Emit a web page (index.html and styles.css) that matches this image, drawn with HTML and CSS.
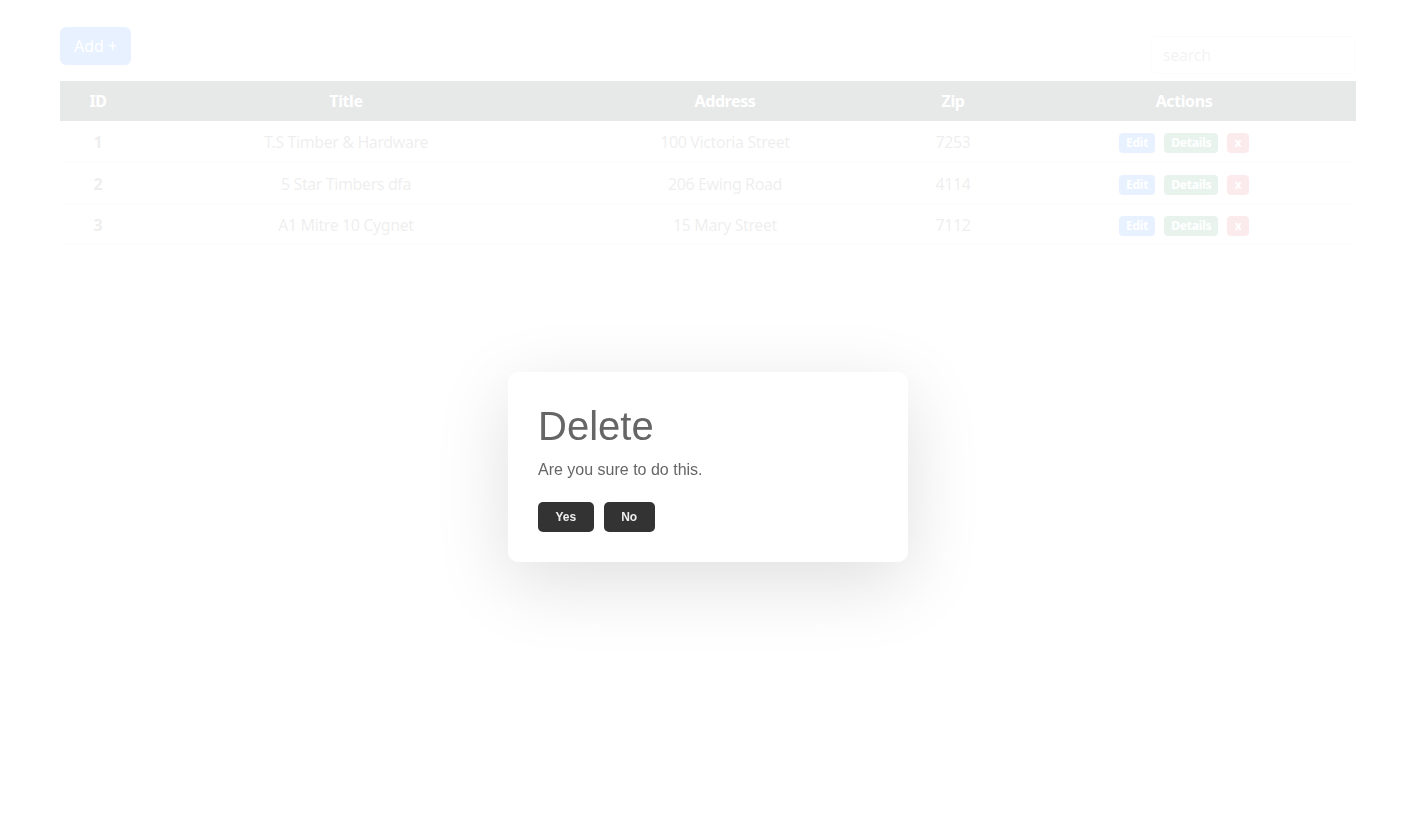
FILE: index.html
```html
<!DOCTYPE html>
<html lang="en">
<head>
<meta charset="utf-8">
<title>Stores</title>
<link rel="stylesheet" href="styles.css">
</head>
<body>
<div class="page">
  <div class="toolbar">
    <button class="btn-add">Add +</button>
    <input class="search" type="text" placeholder="search">
  </div>
  <table class="grid">
    <colgroup>
      <col class="c-id"><col class="c-title"><col class="c-addr"><col class="c-zip"><col class="c-act">
    </colgroup>
    <thead>
      <tr><th>ID</th><th>Title</th><th>Address</th><th>Zip</th><th>Actions</th></tr>
    </thead>
    <tbody>
      <tr>
        <td class="id">1</td><td>T.S Timber &amp; Hardware</td><td>100 Victoria Street</td><td>7253</td>
        <td class="acts"><span class="tag edit">Edit</span><span class="tag details">Details</span><span class="tag del">x</span></td>
      </tr>
      <tr>
        <td class="id">2</td><td>5 Star Timbers dfa</td><td>206 Ewing Road</td><td>4114</td>
        <td class="acts"><span class="tag edit">Edit</span><span class="tag details">Details</span><span class="tag del">x</span></td>
      </tr>
      <tr>
        <td class="id">3</td><td>A1 Mitre 10 Cygnet</td><td>15 Mary Street</td><td>7112</td>
        <td class="acts"><span class="tag edit">Edit</span><span class="tag details">Details</span><span class="tag del">x</span></td>
      </tr>
    </tbody>
  </table>
</div>

<div class="overlay">
  <div class="alert-body">
    <h1>Delete</h1>
    Are you sure to do this.
    <div class="btn-group">
      <button>Yes</button>
      <button>No</button>
    </div>
  </div>
</div>
</body>
</html>
```

FILE: styles.css
```css
* { box-sizing: border-box; }

html, body {
  margin: 0;
  padding: 0;
  background: #fff;
}

body {
  font-family: "Noto Sans", "Open Sans", sans-serif;
  font-size: 16px;
  line-height: 1.5;
  color: #555;
}

.page {
  width: 1296px;
  margin-left: 60px;
  padding-top: 27px;
}

.toolbar {
  display: flex;
  justify-content: space-between;
  align-items: flex-end;
  height: 47px;
}

.btn-add {
  align-self: flex-start;
  height: 38px;
  padding: 6px 13px;
  border: 1px solid #0d6efd;
  background: #0d6efd;
  color: #fff;
  border-radius: 6px;
  font: inherit;
  font-size: 16px;
  line-height: 24px;
}

.search {
  width: 206px;
  height: 38px;
  padding: 6px 12px;
  border: 1px solid #ced4da;
  border-radius: 6px;
  font: inherit;
  font-size: 16px;
  letter-spacing: -0.3px;
  color: #212529;
}

.search::placeholder { color: #888; }

.grid {
  width: 1296px;
  margin-top: 7px;
  border-collapse: collapse;
  table-layout: fixed;
  letter-spacing: -0.4px;
}

.c-id { width: 76px; }
.c-title { width: 420px; }
.c-addr { width: 338px; }
.c-zip { width: 118px; }
.c-act { width: 344px; }

.grid th {
  background: #111a1a;
  color: #fff;
  font-weight: 700;
  height: 40px;
  padding: 8px;
  text-align: center;
  vertical-align: middle;
}

.grid td {
  height: 41px;
  padding: 9px 8px 7px;
  text-align: center;
  vertical-align: middle;
  border-bottom: 1px solid #dee2e6;
}

.grid td.id { font-weight: 700; }

.grid td.acts {
  padding-top: 12px;
  padding-bottom: 8px;
  line-height: 20px;
  letter-spacing: 0;
}

.tag {
  display: inline-block;
  vertical-align: top;
  height: 20px;
  margin: 0 4.5px;
  padding: 0 7px;
  border-radius: 4px;
  color: #fff;
  font-size: 12px;
  font-weight: 700;
  line-height: 20px;
  letter-spacing: -0.2px;
}

.edit { background: #0d6efd; }
.details { background: #198754; }
.del { background: #dc3545; padding: 0 7.5px; }

.overlay {
  position: fixed;
  inset: 0;
  background: rgba(255, 255, 255, 0.9);
  display: flex;
  justify-content: flex-start;
  align-items: flex-start;
  padding: 372px 0 0 508px;
}

.alert-body {
  font-family: "Liberation Sans", Arial, sans-serif;
  width: 400px;
  padding: 30px;
  text-align: left;
  background: #fff;
  border-radius: 10px;
  box-shadow: 0 20px 75px rgba(0, 0, 0, 0.13);
  color: #666;
  font-size: 16px;
  line-height: 24px;
}

.alert-body h1 {
  margin: 0 0 8px;
  font-size: 40px;
  font-weight: 500;
  line-height: 48px;
}

.btn-group {
  display: flex;
  margin-top: 20px;
}

.btn-group button {
  background: #333;
  border: none;
  padding: 6px 17.5px;
  color: #eee;
  margin-right: 10px;
  border-radius: 5px;
  font-family: "Liberation Sans", Arial, sans-serif;
  font-size: 12px;
  font-weight: 700;
  line-height: 18px;
}
```
